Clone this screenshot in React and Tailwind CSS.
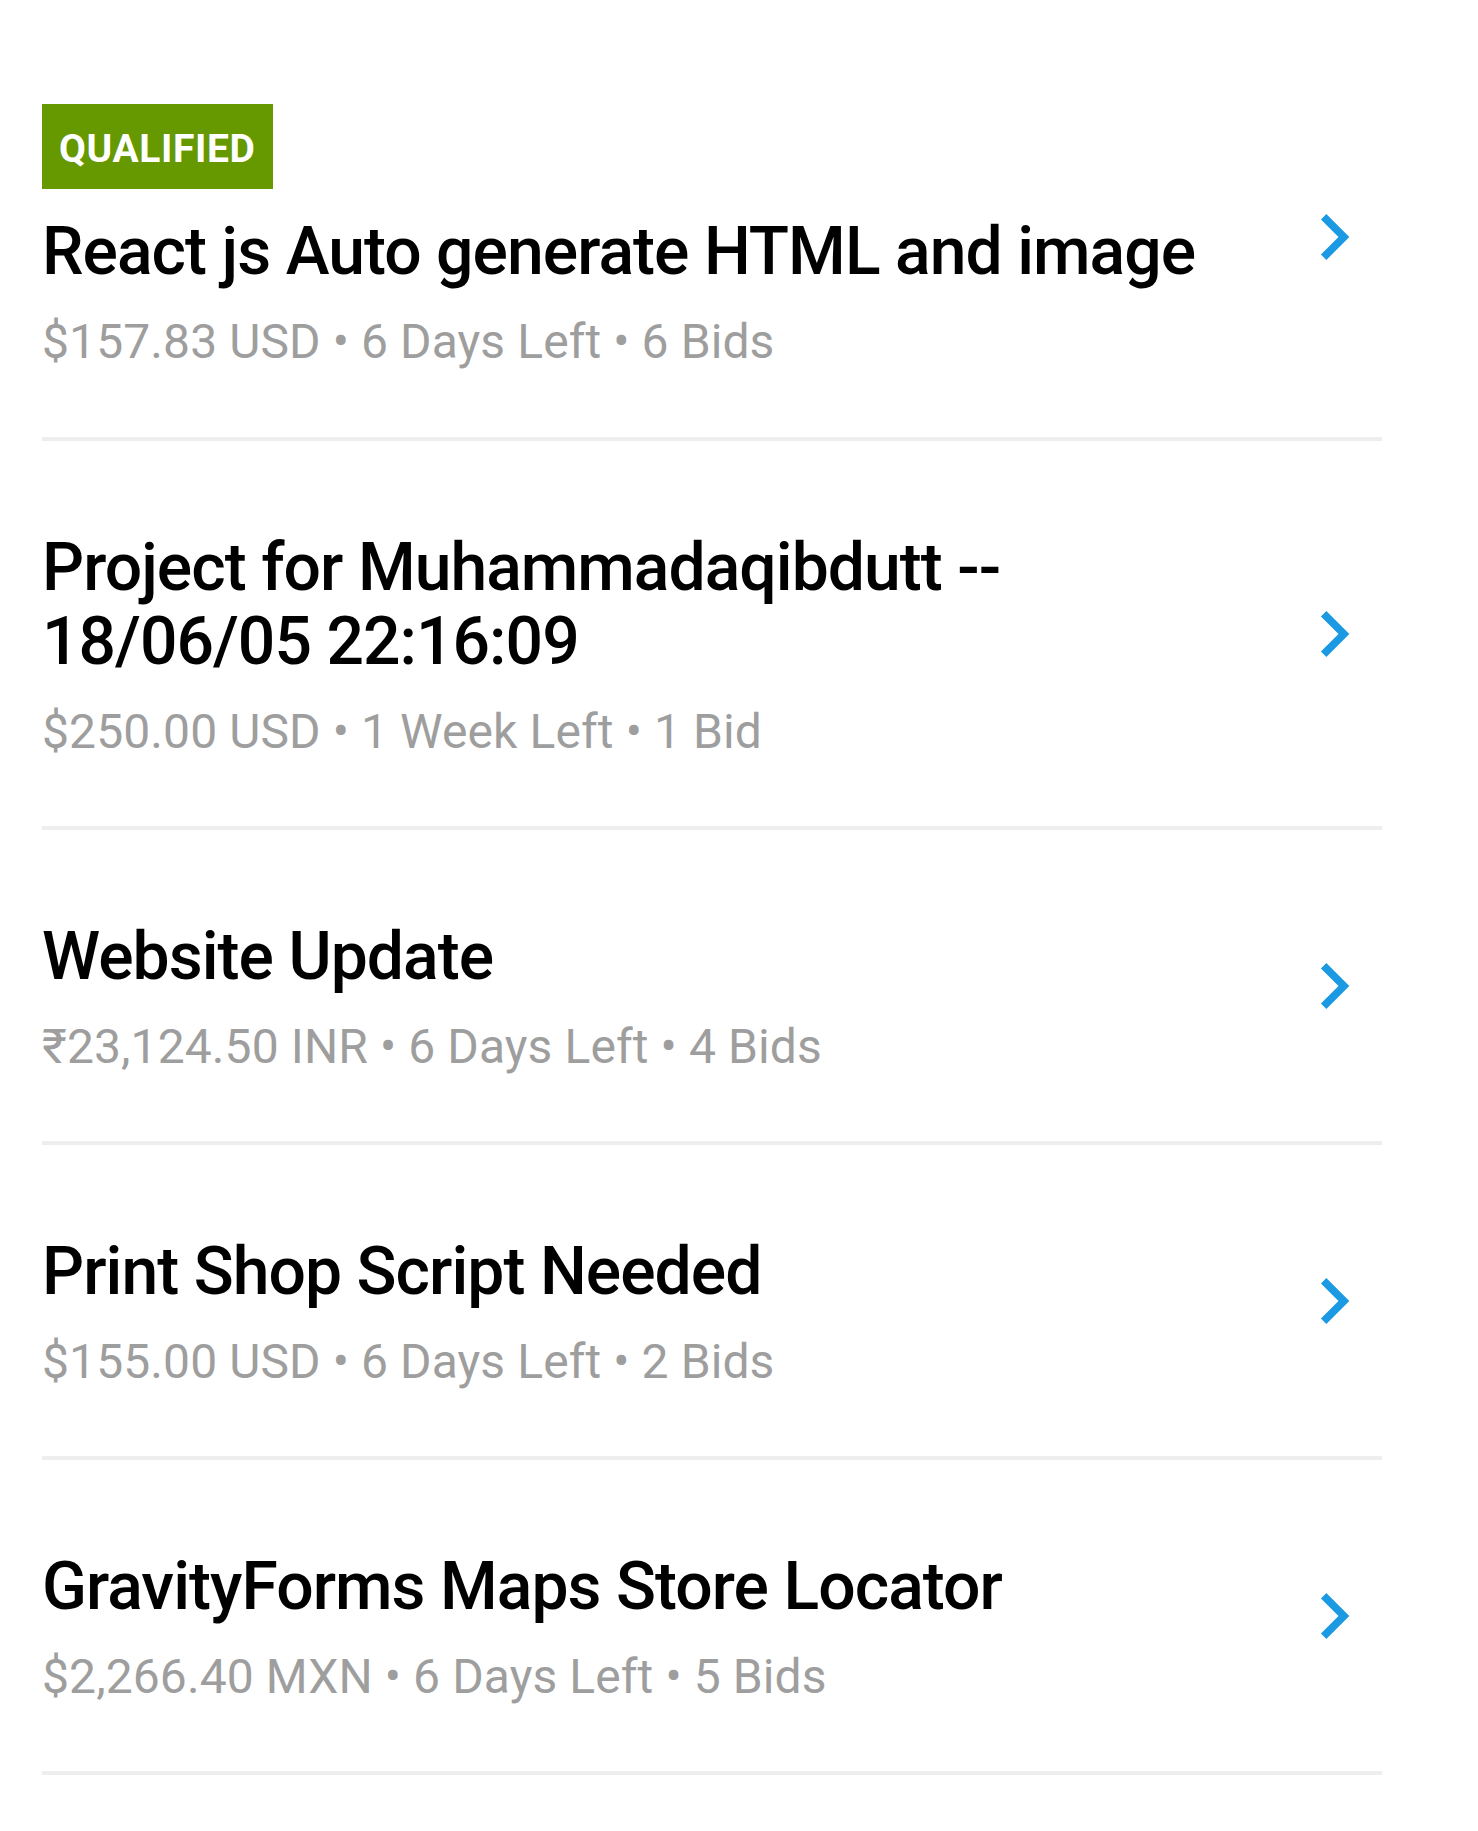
import React from "react";

const items = [
  {
    badge: "QUALIFIED",
    title: ["React js Auto generate HTML and image"],
    meta: "$157.83 USD • 6 Days Left • 6 Bids",
  },
  {
    title: ["Project for Muhammadaqibdutt --", "18/06/05 22:16:09"],
    meta: "$250.00 USD • 1 Week Left • 1 Bid",
  },
  {
    title: ["Website Update"],
    meta: "₹23,124.50 INR • 6 Days Left • 4 Bids",
  },
  {
    title: ["Print Shop Script Needed"],
    meta: "$155.00 USD • 6 Days Left • 2 Bids",
  },
  {
    title: ["GravityForms Maps Store Locator"],
    meta: "$2,266.40 MXN • 6 Days Left • 5 Bids",
  },
];

function Chevron() {
  return (
    <svg
      width="92"
      height="92"
      viewBox="0 0 24 24"
      className="shrink-0 mr-[2px]"
      fill="#1b9ae3"
    >
      <path d="M10 6L8.59 7.41 13.17 12l-4.58 4.59L10 18l6-6z" />
    </svg>
  );
}

export default function App() {
  return (
    <div
      className="w-[1478px] min-h-[1831px] bg-white pt-[36px]"
      style={{ fontFamily: "Roboto, 'Noto Sans', sans-serif" }}
    >
      <div className="ml-[42px] w-[1340px] flex flex-col">
        {items.map((it, i) => (
          <div
            key={i}
            className="flex items-center border-b-[4px] border-[#eeeeee]"
          >
            <div
              className={
                "flex-1 min-w-0 flex flex-col items-start " +
                (it.badge ? "pt-[68px] pb-[67px]" : "pt-[90px] pb-[66px]")
              }
            >
              {it.badge && (
                <div className="bg-[#669900] text-white font-bold text-[39px] tracking-[0.6px] leading-[80px] pt-[5px] pl-[17px] pr-[18px] mb-[26px]">
                  {it.badge}
                </div>
              )}
              <div className="text-black font-medium text-[66px] tracking-[-0.95px] leading-[74px]">
                {it.title.map((t, j) => (
                  <div key={j}>{t}</div>
                ))}
              </div>
              <div className="mt-[25px] text-[#9e9e9e] text-[48px] tracking-[0.1px] leading-[56px]">
                {it.meta}
              </div>
            </div>
            <Chevron />
          </div>
        ))}
      </div>
    </div>
  );
}
